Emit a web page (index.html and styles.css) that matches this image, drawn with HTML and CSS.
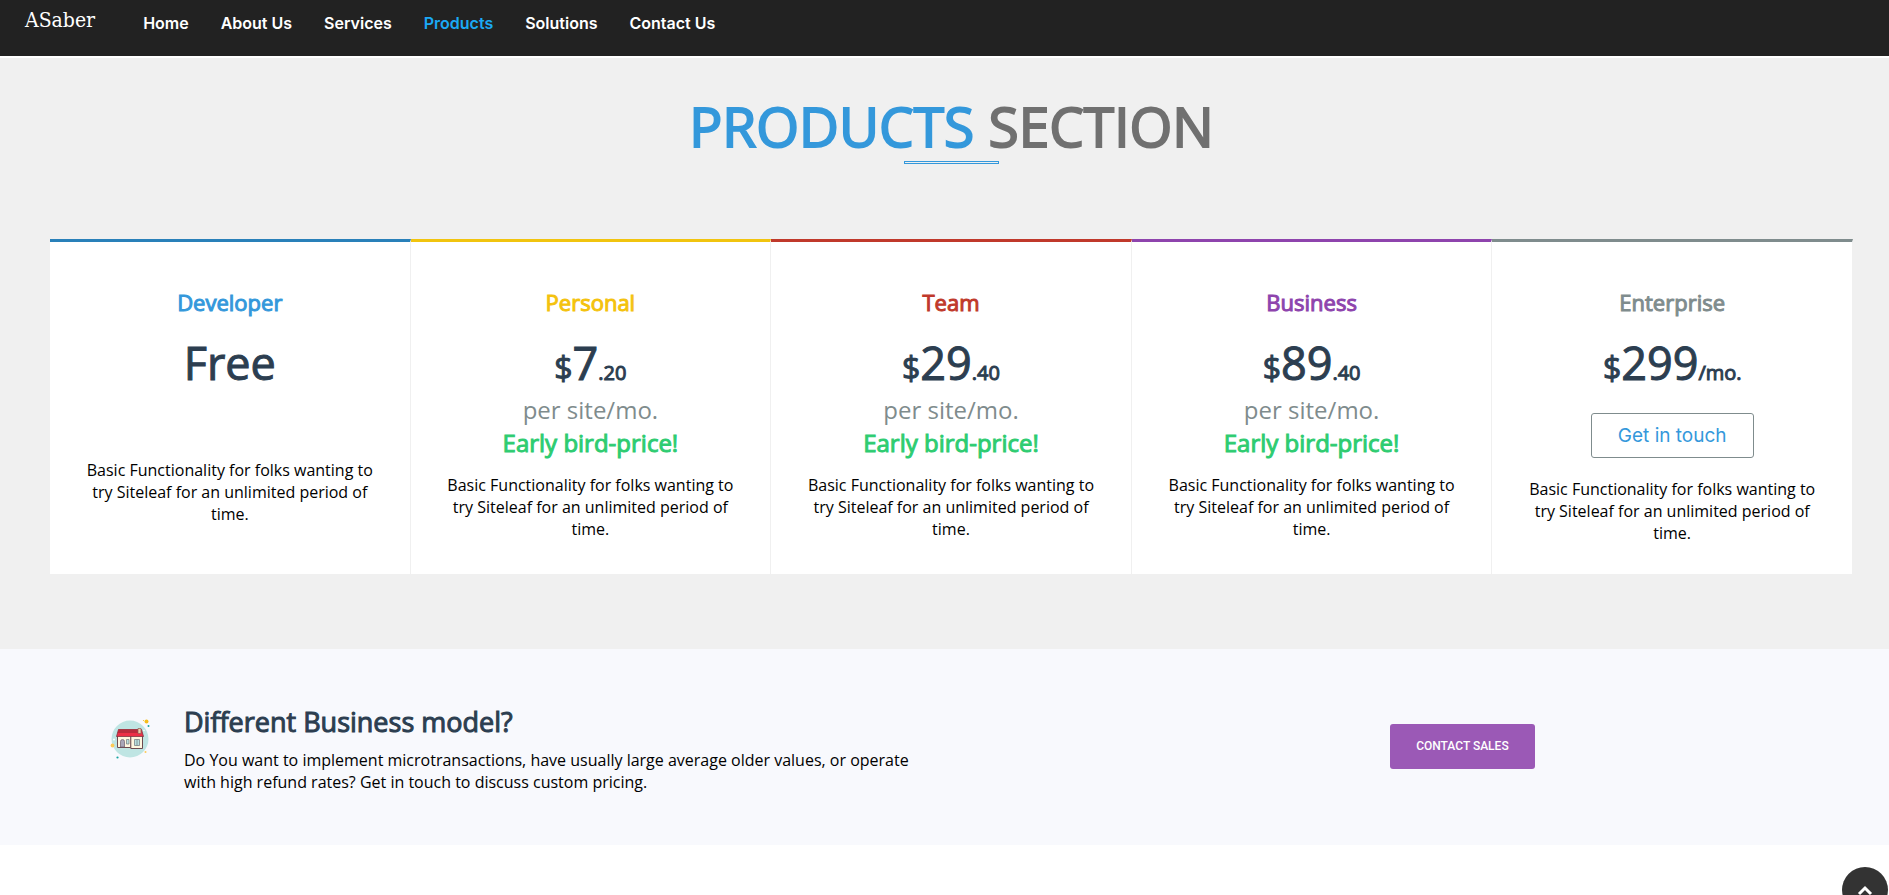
FILE: index.html
```html
<!DOCTYPE html>
<html lang="en">
<head>
<meta charset="utf-8">
<meta name="viewport" content="width=device-width, initial-scale=1">
<title>ASaber - Products</title>
<link rel="stylesheet" href="styles.css">
</head>
<body>
<header class="header">
  <a class="logo" href="#">ASaber</a>
  <nav class="nav">
    <a href="#">Home</a>
    <a href="#">About Us</a>
    <a href="#">Services</a>
    <a class="active" href="#">Products</a>
    <a href="#">Solutions</a>
    <a href="#">Contact Us</a>
  </nav>
</header>
<main>
  <section class="products">
    <h1 class="title"><span class="title-accent">PRODUCTS</span> SECTION</h1>
    <div class="rule"></div>
    <div class="plans">
      <article class="plan developer">
        <h2 class="name">Developer</h2>
        <p class="price">Free</p>
        <p class="desc">Basic Functionality for folks wanting to try Siteleaf for an unlimited period of time.</p>
      </article>
      <article class="plan personal">
        <h2 class="name">Personal</h2>
        <p class="price"><span class="currency">$</span>7<span class="cents">.20</span></p>
        <p class="per">per site/mo.</p>
        <p class="early">Early bird-price!</p>
        <p class="desc">Basic Functionality for folks wanting to try Siteleaf for an unlimited period of time.</p>
      </article>
      <article class="plan team">
        <h2 class="name">Team</h2>
        <p class="price"><span class="currency">$</span>29<span class="cents">.40</span></p>
        <p class="per">per site/mo.</p>
        <p class="early">Early bird-price!</p>
        <p class="desc">Basic Functionality for folks wanting to try Siteleaf for an unlimited period of time.</p>
      </article>
      <article class="plan business">
        <h2 class="name">Business</h2>
        <p class="price"><span class="currency">$</span>89<span class="cents">.40</span></p>
        <p class="per">per site/mo.</p>
        <p class="early">Early bird-price!</p>
        <p class="desc">Basic Functionality for folks wanting to try Siteleaf for an unlimited period of time.</p>
      </article>
      <article class="plan enterprise">
        <h2 class="name">Enterprise</h2>
        <p class="price"><span class="currency">$</span>299<span class="cents">/mo.</span></p>
        <button class="touch" type="button">Get in touch</button>
        <p class="desc">Basic Functionality for folks wanting to try Siteleaf for an unlimited period of time.</p>
      </article>
    </div>
  </section>
  <section class="contact">
    <svg class="house" viewBox="0 0 40 40" aria-hidden="true">
      <circle cx="20" cy="20" r="18.500" fill="#bfe5e3"/>
      <circle cx="36.500" cy="2.500" r="2" fill="#f5bd1c"/>
      <circle cx="33.500" cy="1.500" r=".6" fill="#f5bd1c"/>
      <circle cx="38.500" cy="7" r="1" fill="#15a3a0"/>
      <circle cx="2.500" cy="26.500" r="1.900" fill="#fccb58"/>
      <circle cx="35.500" cy="33" r="1" fill="#fccb58"/>
      <circle cx="7.500" cy="38.500" r="1.100" fill="#15a3a0"/>
      <circle cx="4" cy="20.500" r="1" fill="#fff"/>
      <circle cx="34" cy="11.500" r=".8" fill="#fff"/>
      <path d="M7.500 16.500H21V28.500H7.500z" fill="#fff7e0" stroke="#6d4b4f"/>
      <path d="M20.800 16.500H32.500V29.500H20.800z" fill="#fff7e0" stroke="#6d4b4f"/>
      <path d="M8.500 10.500H31.500L33.500 17.500H6.500z" fill="#ed3047" stroke="#7c3943" stroke-width=".8"/>
      <path d="M8.500 10.500H30L31 14H7.500z" fill="#b92c3d"/>
      <path d="M28 9.500h3v5h-3z" fill="#f1cda5" stroke="#8b5a57" stroke-width=".7"/>
      <path d="M10.500 28V22.500q0-2 2-2t2 2V28z" fill="#a8a6b8" stroke="#6b5e70" stroke-width=".7"/>
      <path d="M16.500 20.500H19V25H16.500zM24.500 20.500h5v6h-5zM27 20.500v6" fill="#bae0df" stroke="#70777c" stroke-width=".7"/>
    </svg>
    <div class="contact-text">
      <h2 class="contact-title">Different Business model?</h2>
      <p class="contact-desc">Do You want to implement microtransactions, have usually large average older values, or operate with high refund rates? Get in touch to discuss custom pricing.</p>
    </div>
    <button class="sales" type="button">CONTACT SALES</button>
  </section>
</main>
<a class="to-top" href="#" aria-label="Back to top">
  <svg class="chevron" viewBox="0 0 16 12" aria-hidden="true"><path d="M2 9l6-6 6 6" fill="none" stroke="#fff" stroke-width="3"/></svg>
</a>
</body>
</html>
```
FILE: styles.css
```css
* {
  box-sizing: border-box;
}

body {
  margin: 0;
  background: #fff;
  color: #000;
  font: 16px/22px "Open Sans", "Noto Sans", sans-serif;
}

h1, h2, p {
  margin: 0;
  font-weight: 400;
}

a {
  text-decoration: none;
}

.header {
  display: flex;
  align-items: flex-start;
  height: 56px;
  padding: 8px 25px;
  margin-bottom: 2px;
  background: #222;
  gap: 48px;
}

.logo {
  color: #fff;
  font: 21px/24px "DejaVu Serif Condensed", "Liberation Serif", serif;
}

.nav {
  display: flex;
  gap: 32px;
  font: 600 16px/30px Inter, sans-serif;
}

.nav a {
  color: #fff;
}

.nav .active {
  color: #1ba9f5;
}

.products {
  padding: 33px 36px 75px 50px;
  background: #f0f0f0;
}

.title {
  color: #707070;
  font-size: 55px;
  line-height: 70px;
  text-align: center;
  -webkit-text-stroke: 2px;
}

.title-accent {
  color: #3498db;
}

.rule {
  width: 95px;
  height: 3px;
  margin: 0 auto 75px;
  border: 1px solid #3498db;
}

.plans {
  display: grid;
  grid-template-columns: repeat(5, 1fr);
}

.plan {
  padding: 45px 32px 30px;
  border-top: 3px solid;
  border-right: 1px solid #f0f0f0;
  background: #fff;
  text-align: center;
}

.name {
  font-size: 22px;
  line-height: 30px;
  -webkit-text-stroke: 1px;
}

.developer { border-top-color: #2980b9; }
.personal { border-top-color: #f1c40f; }
.team { border-top-color: #c0392b; }
.business { border-top-color: #8e44ad; }
.enterprise { border-top-color: #7f8c8d; }

.developer .name { color: #3498db; }
.personal .name { color: #f4c20d; }
.team .name { color: #c0392b; }
.business .name { color: #8e44ad; }
.enterprise .name { color: #7f8c8d; }

.price {
  margin-top: 16px;
  color: #2c3e50;
  font-size: 45px;
  line-height: 60px;
  -webkit-text-stroke: 1px;
}

.currency {
  font-size: 32px;
  line-height: 1;
}

.cents {
  font-size: 20px;
  line-height: 1;
}

.per {
  color: #7f8c8d;
  font-size: 24px;
  line-height: 34px;
}

.early {
  color: #2ecc71;
  font-size: 24px;
  line-height: 32px;
  -webkit-text-stroke: 1px;
}

.desc {
  margin-top: 15px;
}

.developer .desc {
  margin-top: 66px;
}

.enterprise .desc {
  margin-top: 20px;
}

.touch {
  margin-top: 20px;
  padding: 10px 26px;
  border: 1px solid #7f8c8d;
  border-radius: 3px;
  background: #fff;
  color: #3498db;
  font: 19px/23px Inter, sans-serif;
}

.contact {
  display: grid;
  grid-template-columns: 74px 3fr 2fr;
  align-items: start;
  padding: 54px 107px 52px 110px;
  background: #f8f9fd;
}

.house {
  width: 40px;
  height: 40px;
  margin-top: 16px;
}

.contact-text {
  max-width: 750px;
}

.contact-title {
  margin-bottom: 8px;
  color: #2c3e50;
  font-size: 27px;
  line-height: 38px;
  -webkit-text-stroke: 1px;
}

.sales {
  justify-self: center;
  margin-top: 21px;
  padding: 12px 26px;
  border: 0;
  border-radius: 3px;
  background: #9b59b6;
  color: #fff;
  font: 500 12px/21px Roboto, sans-serif;
}

.to-top {
  position: fixed;
  right: 1px;
  bottom: -18px;
  display: flex;
  justify-content: center;
  width: 46px;
  height: 46px;
  padding-top: 18px;
  border-radius: 50%;
  background: #333;
}

.chevron {
  width: 16px;
  height: 12px;
}
```
